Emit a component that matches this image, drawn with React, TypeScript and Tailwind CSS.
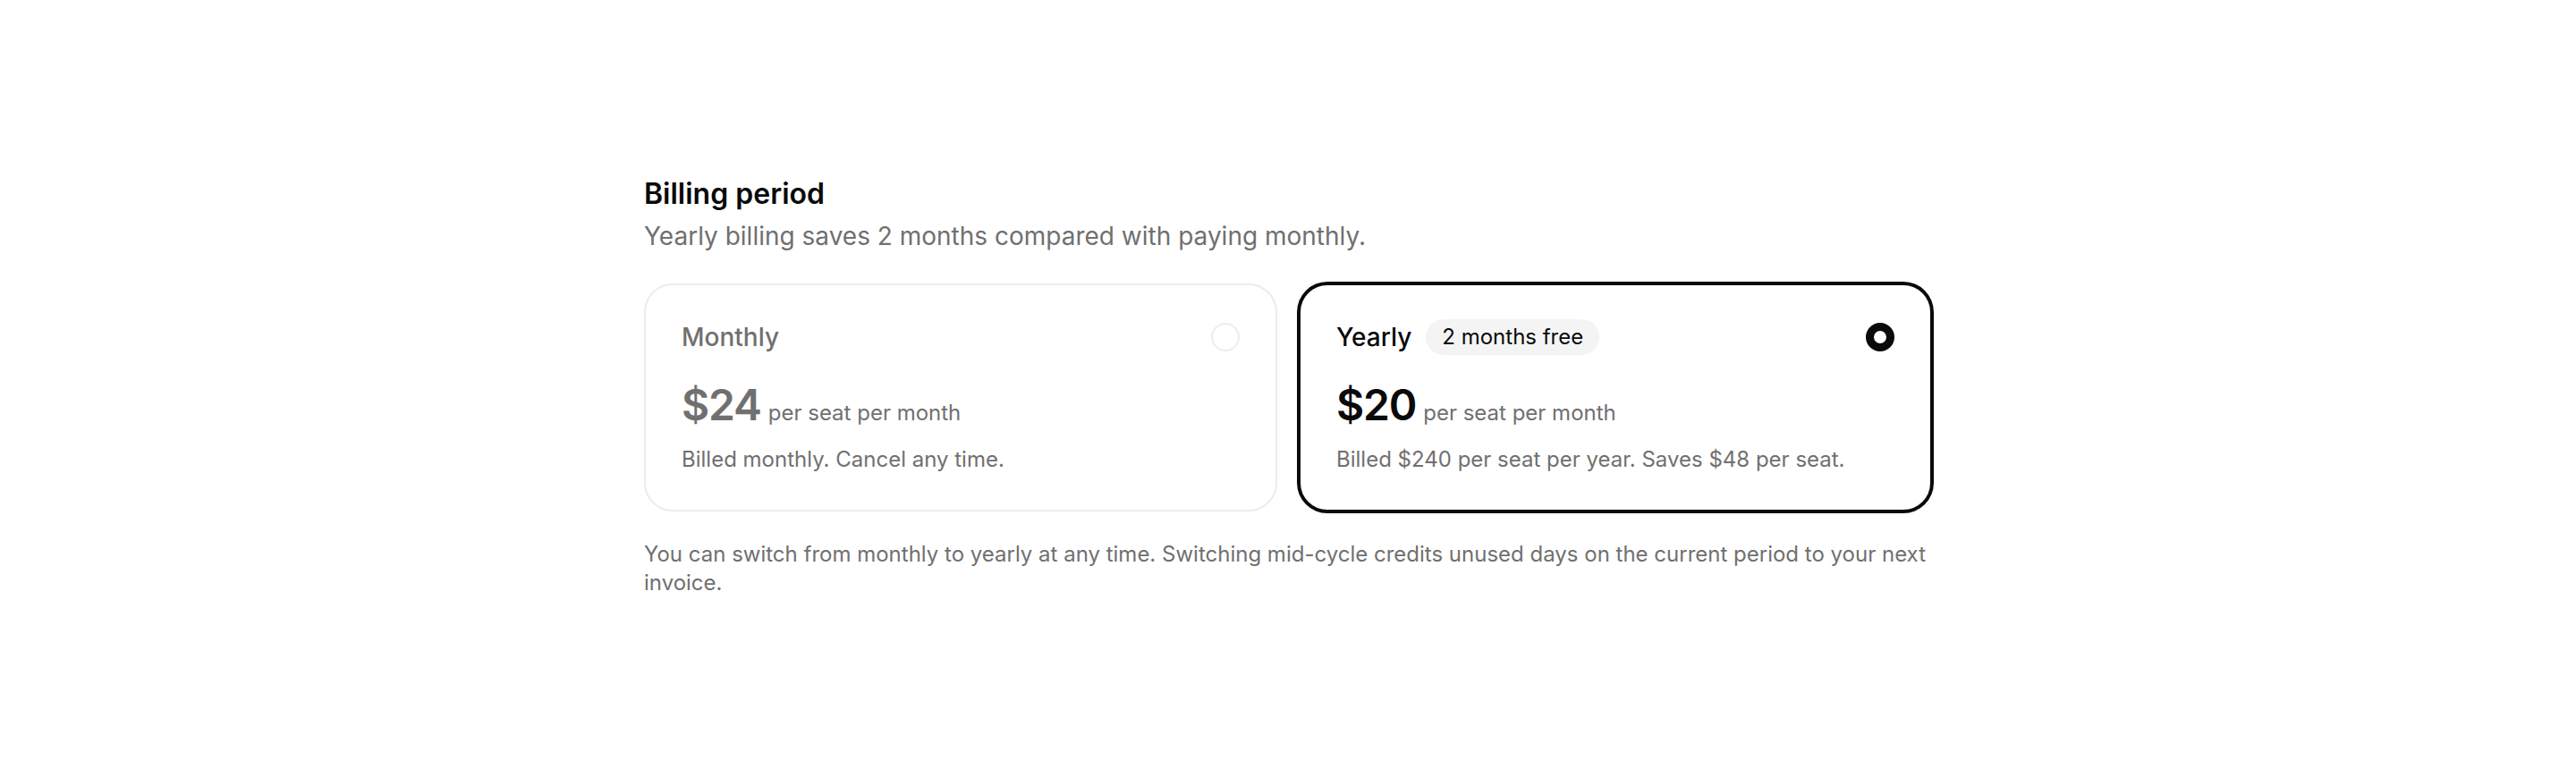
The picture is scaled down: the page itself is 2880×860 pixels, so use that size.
import React, { useState } from "react";

type Plan = {
  id: "monthly" | "yearly";
  label: string;
  price: string;
  note: string;
  badge?: string;
};

const plans: Plan[] = [
  {
    id: "monthly",
    label: "Monthly",
    price: "$24",
    note: "Billed monthly. Cancel any time.",
  },
  {
    id: "yearly",
    label: "Yearly",
    price: "$20",
    note: "Billed $240 per seat per year. Saves $48 per seat.",
    badge: "2 months free",
  },
];

function PlanCard({
  plan,
  selected,
  onSelect,
}: {
  plan: Plan;
  selected: boolean;
  onSelect: () => void;
}) {
  return (
    <button
      type="button"
      role="radio"
      aria-checked={selected}
      onClick={onSelect}
      className={
        selected
          ? "flex flex-col rounded-[32px] border-2 border-[#0a0a0a] bg-white px-10 pt-[38px] pb-10 text-left ring-2 ring-[#0a0a0a]"
          : "flex flex-col rounded-[32px] border-2 border-[#ececec] bg-white px-10 pt-[38px] pb-10 text-left"
      }
    >
      <div className="flex h-10 w-full items-center justify-between">
        <div className="flex items-center gap-4">
          <span
            className={
              selected
                ? "text-[28px] font-medium leading-none text-[#0a0a0a]"
                : "text-[28px] font-medium leading-none text-[#707070]"
            }
          >
            {plan.label}
          </span>
          {plan.badge && (
            <span className="flex h-10 items-center rounded-full bg-[#f4f4f4] px-[18px] text-[24px] font-normal text-[#0a0a0a]">
              {plan.badge}
            </span>
          )}
        </div>
        <span
          className={
            selected
              ? "block h-8 w-8 rounded-full border-[9px] border-[#0a0a0a]"
              : "block h-8 w-8 rounded-full border-2 border-[#ececec]"
          }
        />
      </div>
      <div className="mt-8 flex items-baseline gap-2">
        <span
          className={
            selected
              ? "text-[48px] font-semibold leading-none tracking-tight text-[#0a0a0a]"
              : "text-[48px] font-semibold leading-none tracking-tight text-[#707070]"
          }
        >
          {plan.price}
        </span>
        <span className="text-[24px] leading-8 text-[#707070]">per seat per month</span>
      </div>
      <p className="mt-5 text-[24px] leading-8 text-[#707070]">{plan.note}</p>
    </button>
  );
}

export default function App() {
  const [period, setPeriod] = useState<"monthly" | "yearly">("yearly");

  return (
    <div
      className="min-h-screen bg-white pt-[197px]"
      style={{ fontFamily: "Inter, 'Noto Sans', sans-serif" }}
    >
      <section className="mx-auto w-[1440px]">
        <h2 className="text-[32px] font-semibold leading-10 text-[#0a0a0a]">Billing period</h2>
        <p className="mt-1.5 text-[28px] leading-[42px] text-[#707070]">
          Yearly billing saves 2 months compared with paying monthly.
        </p>
        <div role="radiogroup" className="mt-8 grid grid-cols-2 gap-6">
          {plans.map((p) => (
            <PlanCard
              key={p.id}
              plan={p}
              selected={period === p.id}
              onSelect={() => setPeriod(p.id)}
            />
          ))}
        </div>
        <p className="mt-8 text-[24px] leading-8 text-[#707070]">
          You can switch from monthly to yearly at any time. Switching mid-cycle credits unused
          days on the current period to your next invoice.
        </p>
      </section>
    </div>
  );
}
